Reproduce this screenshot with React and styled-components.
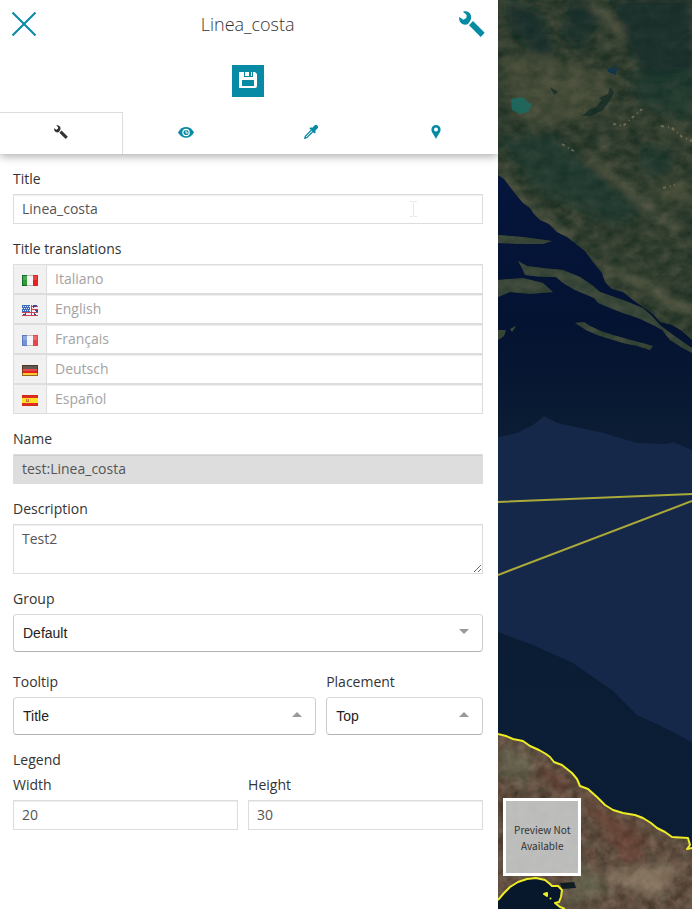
import React from 'react';
import styled, { createGlobalStyle } from 'styled-components';

const GlobalStyle = createGlobalStyle`
  *, *::before, *::after { box-sizing: border-box; }
  body {
    margin: 0;
    background: #fff;
    color: #333;
    font-family: 'Open Sans', sans-serif;
    font-size: 14px;
    line-height: 20px;
  }
  button, input, textarea { font-family: inherit; font-size: inherit; }
`;

const Layout = styled.div`
  display: flex;
  min-height: 100vh;
`;

const Panel = styled.section`
  flex: 0 0 72%;
  min-width: 0;
  background: #fff;
`;

const PanelHeader = styled.header`
  box-shadow: 0 2px 9px rgba(0, 0, 0, 0.35);
  clip-path: inset(0 0 -16px 0);
`;

const TitleBar = styled.div`
  display: flex;
  align-items: center;
  justify-content: space-between;
  height: 48px;
  padding: 0 13px 0 12px;
`;

const Heading = styled.h1`
  margin: 0;
  font-size: 18px;
  font-weight: 300;
  line-height: 24px;
`;

const IconButton = styled.button`
  display: flex;
  padding: 0;
  border: 0;
  background: none;
  color: #078aa3;
`;

const Toolbar = styled.div`
  display: flex;
  justify-content: center;
  padding: 17px 2px 15px 0;
`;

const SaveButton = styled.button`
  display: grid;
  place-items: center;
  width: 32px;
  height: 32px;
  padding: 0 0 2px;
  border: 0;
  background: #078aa3;
  color: #fff;
`;

const TabBar = styled.div`
  display: grid;
  grid-template-columns: 123fr 125fr 125fr 125fr;
  height: 42px;
`;

const Tab = styled.button`
  display: grid;
  place-items: center;
  padding: ${(p) => (p.$active ? '0 1px 3px 0' : '0 0 2px 1px')};
  border: solid #ddd;
  border-width: ${(p) => (p.$active ? '1px 1px 0 0' : '0')};
  background: none;
  color: ${(p) => (p.$active ? '#333' : '#078aa3')};
`;

const Form = styled.form`
  display: flex;
  flex-direction: column;
  gap: 15px;
  padding: 15px 15px 15px 13px;
`;

const Field = styled.div`
  display: flex;
  flex-direction: column;
  gap: 5px;
  min-width: 0;
  position: relative;
`;

const Columns = styled.div`
  display: grid;
  grid-template-columns: ${(p) => p.$split};
  gap: 10px;
  padding-top: ${(p) => (p.$spaced ? '5px' : '0')};
`;

const Label = styled.label`
  font-weight: 500;
  color: #333;
`;

const Fieldset = styled.fieldset`
  min-width: 0;
  margin: 0;
  padding: 0;
  border: 0;
`;

const Legend = styled.legend`
  padding: 0 0 5px;
  font-weight: 500;
`;

const TextInput = styled.input`
  width: 100%;
  height: 30px;
  padding: 0 8px 2px;
  border: 1px solid #ddd;
  border-radius: 0;
  outline: 0;
  background: ${(p) => (p.readOnly ? '#ddd' : '#fff')};
  box-shadow: inset 0 1px 1px rgba(0, 0, 0, 0.07);
  color: #555;
  &::placeholder { color: #a3a3a3; opacity: 1; }
`;

const TextArea = styled.textarea`
  display: block;
  width: 100%;
  height: 50px;
  padding: 4px 8px;
  border: 1px solid #ddd;
  outline: 0;
  box-shadow: inset 0 1px 1px rgba(0, 0, 0, 0.07);
  color: #555;
  line-height: 20px;
  resize: vertical;
`;

const InputGroup = styled.div`
  display: flex;
`;

const Addon = styled.label`
  display: grid;
  place-items: center;
  flex: 0 0 33px;
  height: 30px;
  padding-top: 2px;
  border: solid #ddd;
  border-width: 1px 0 1px 1px;
  background: #f1f1f1;
`;

const SelectBox = styled.div`
  display: grid;
  grid-template-columns: 1fr;
  align-items: center;
`;

const Select = styled.select`
  grid-area: 1 / 1;
  width: 100%;
  height: 38px;
  padding: 0 28px 0 9px;
  appearance: none;
  border: 1px solid;
  border-color: #d9d9d9 #ccc #b3b3b3;
  border-radius: 4px;
  outline: 0;
  background: #fff;
  color: #222;
  font-family: 'Liberation Sans', sans-serif;
  font-size: 14px;
`;

const Arrow = styled.svg`
  grid-area: 1 / 1;
  justify-self: end;
  margin: 0 14px 3px 0;
  pointer-events: none;
`;

const TextCursor = styled.svg`
  position: absolute;
  right: 65px;
  bottom: 7px;
  pointer-events: none;
`;

const MapPane = styled.main`
  flex: 1;
  min-width: 0;
  position: relative;
  overflow: hidden;
  background: #07152f;
`;

const MapDrawing = styled.svg`
  display: block;
  width: 100%;
  height: 100%;
`;

const PreviewTile = styled.button`
  position: absolute;
  left: 5px;
  bottom: 33px;
  width: 78px;
  height: 78px;
  padding: 2px 0 0;
  border: 3px solid #fff;
  background: rgba(202, 205, 205, 0.88);
  color: #333;
  font-family: 'Noto Sans CJK SC', sans-serif;
  font-size: 10px;
  line-height: 16px;
`;

const WrenchIcon = ({ size }) => (
  <svg width={size} height={size} viewBox="0 0 78 78" fill="currentColor" aria-hidden="true">
    <path d="M12 2C23-2 34 4 36 14C37 19 36 24 34 29L27 39C19 44 8 40 3 32C0 27 0 21 1 18L13 26L22 21L23 12Z" />
    <path d="M42 30L77 65L65 78L30 43Z" />
  </svg>
);

const CloseIcon = () => (
  <svg width="24" height="24" viewBox="0 0 24 24" fill="none" stroke="currentColor" strokeWidth="2" aria-hidden="true">
    <path d="M0.5 0.5L23.5 23.5M23.5 0.5L0.5 23.5" />
  </svg>
);

const SaveIcon = () => (
  <svg width="18" height="16" viewBox="0 0 18 16" fill="currentColor" aria-hidden="true">
    <path fillRule="evenodd" d="M0 0H5V5H14V0H16L18 2V14Q18 16 16 16H0ZM3 8V14H15V8Z" />
    <path d="M6 0H10V4H6ZM12 0H13V4H12Z" />
  </svg>
);

const EyeIcon = () => (
  <svg width="16" height="11" viewBox="0 0 16 11" aria-hidden="true">
    <path fill="currentColor" d="M0 5.5C4-1.7 12-1.7 16 5.5C12 12.5 4 12.5 0 5.5Z" />
    <circle cx="8" cy="5.5" r="3.2" fill="none" stroke="#fff" strokeWidth="1.2" />
    <path d="M8 3.5V6H10" fill="none" stroke="#fff" />
  </svg>
);

const DropperIcon = () => (
  <svg width="14" height="14" viewBox="0 0 14 14" fill="currentColor" aria-hidden="true">
    <path d="M8 3L10 1Q12-1 13.4.6Q15 2 13 4L11 6L12 7L10.5 8.5L5.5 3.5L7 2Z" />
    <path d="M7.5 5L1.5 11L1 13L3 12.5L9 6.5" fill="none" stroke="currentColor" strokeWidth="1.2" />
    <path d="M0 14L1 11L3 13Z" />
  </svg>
);

const PinIcon = () => (
  <svg width="10" height="14" viewBox="0 0 10 14" fill="currentColor" aria-hidden="true">
    <path fillRule="evenodd" d="M5 0A4.6 4.6 0 0 1 9.6 4.6C9.6 7.5 6.8 10 5 14C3.2 10 .4 7.5 .4 4.6A4.6 4.6 0 0 1 5 0ZM5 2.5A2 2 0 1 0 5 6.5A2 2 0 0 0 5 2.5Z" />
  </svg>
);

const flags = {
  it: (
    <>
      <path fill="#2c9c38" d="M0 0H5V11H0Z" /><path fill="#f4f4f0" d="M5 0H11V11H5Z" /><path fill="#e82020" d="M11 0H16V11H11Z" />
      <path fill="#fff" opacity=".15" d="M1 1H15V5H1Z" />
      <path fill="none" stroke="#146b20" d="M5 .5H.5V10.5H5" /><path stroke="#bbb" d="M5 .5H11M5 10.5H11" />
    </>
  ),
  en: (
    <>
      <path fill="#f7eaf0" d="M0 0H16V11H0Z" />
      <path stroke="#ce4055" d="M9 1.5H16M9 4.5H16M0 7.5H16M0 10.5H16M9.5 0V11" />
      <path fill="#3d69bd" d="M0 0H8V7H0Z" />
      <path fill="#254b9b" d="M11 0H15V1L11 3ZM12 5H16V7H14ZM0 10L4 8V10ZM12 8L15 10H12Z" />
      <path stroke="#dcebff" strokeDasharray="1 1" d="M1 1.5H8M0 3.5H8M1 5.5H8" />
    </>
  ),
  fr: (
    <>
      <path fill="#7193da" d="M0 0H5V11H0Z" /><path fill="#f3f2f5" d="M5 0H11V11H5Z" /><path fill="#e8444a" d="M11 0H16V11H11Z" />
      <path fill="#fff" opacity=".2" d="M1 1H15V5H1Z" />
      <path fill="none" stroke="#6079b8" d="M5 .5H.5V10.5H5" /><path stroke="#bbb" d="M5 .5H11M5 10.5H11" />
    </>
  ),
  de: (
    <>
      <path fill="#3c3634" d="M0 0H16V4H0Z" /><path fill="#e22322" d="M0 4H16V8H0Z" /><path fill="#ffc934" d="M0 8H16V11H0Z" />
      <path fill="#fff" opacity=".18" d="M1 1H15V6H1Z" /><path fill="none" stroke="#5e3516" opacity=".65" d="M.5 .5H15.5V10.5H.5Z" />
    </>
  ),
  es: (
    <>
      <path fill="#df2d21" d="M0 0H16V11H0Z" /><path fill="#ffe128" d="M0 3H16V8H0Z" />
      <path fill="none" stroke="#c12815" opacity=".65" d="M.5 3V.5H15.5V3M.5 8V10.5H15.5V8" />
      <path fill="#c66b32" d="M4 4H7V7H4Z" /><path fill="#f4c48c" d="M5 4H6V6H5Z" />
    </>
  ),
};

const Flag = ({ code }) => (
  <svg width="16" height="11" viewBox="0 0 16 11" aria-hidden="true" shapeRendering="crispEdges">{flags[code]}</svg>
);

const languages = [
  ['it', 'Italiano'],
  ['en', 'English'],
  ['fr', 'Français'],
  ['de', 'Deutsch'],
  ['es', 'Español'],
];

const tabs = [
  ['General', <WrenchIcon size={14} />],
  ['Display', <EyeIcon />],
  ['Style', <DropperIcon />],
  ['Feature info', <PinIcon />],
];

const Dropdown = ({ id, label, value, up }) => (
  <Field>
    <Label htmlFor={id}>{label}</Label>
    <SelectBox>
      <Select id={id} defaultValue={value}>
        <option>{value}</option>
      </Select>
      <Arrow width="10" height="5" viewBox="0 0 10 5" fill="#999" aria-hidden="true">
        <path d={up ? 'M0 5L5 0L10 5Z' : 'M0 0H10L5 5Z'} />
      </Arrow>
    </SelectBox>
  </Field>
);

const northCoast = 'M0 0H194V340L184 331L174 325L162 322L155 314L145 307L135 300L125 292L114 289L107 282L104 273L95 262L87 251L79 245L69 237L59 232L51 224L42 220L36 214L32 208L25 203L19 196L12 187L6 179L0 175Z';
const islands = 'M0 235L25 237L54 241L45 244L25 244L0 243ZM20 261L29 266L45 268L65 270L82 277L94 285L102 292L125 300L145 308L154 316L162 325L175 335L194 348V353L183 347L172 340L164 330L155 325L140 318L125 313L112 308L100 303L96 298L89 295L77 290L65 283L58 277L47 277L35 276L27 275L24 268ZM0 280L12 279L25 278L45 283L55 292L32 294L12 292L0 297ZM77 323L86 322L92 326L103 331L115 335L133 340L155 346L152 350L139 346L125 343L112 339L99 335L88 330ZM0 330L8 330L6 336L0 340ZM12 329L18 326L14 332Z';
const southShore = 'M0 734L8 736L15 739L25 741L32 746L41 750L48 754L52 757L56 762L64 765L74 773L79 779L82 786L90 789L99 797L107 805L115 810L125 813L137 815L145 818L153 823L159 828L167 832L174 837L190 838L192 845L189 849L194 848';
const bayShore = 'M0 900L6 893L12 887L20 882L29 879L38 878L47 880L52 884L54 886L60 886L64 890L63 897L61 902L57 903L62 907L67 909';

const SatelliteMap = () => (
  <MapDrawing viewBox="0 0 194 909" preserveAspectRatio="xMinYMin slice" role="img" aria-label="Satellite map">
    <defs>
      <linearGradient id="deepSea" x1="0" y1="0" x2="0" y2="1">
        <stop offset="0.2" stopColor="#05153c" />
        <stop offset="0.36" stopColor="#041331" />
        <stop offset="0.48" stopColor="#0b1c34" />
        <stop offset="1" stopColor="#0b1e36" />
      </linearGradient>
      <filter id="greenTerrain" x="0" y="0" width="100%" height="100%" colorInterpolationFilters="sRGB">
        <feTurbulence type="fractalNoise" baseFrequency="0.07 0.1" numOctaves="5" seed="8" />
        <feColorMatrix values="0.4 0.1 0 0 -0.05  0.28 0.06 0 0 0.05  0.24 0.06 0 0 0.01  0 0 0 0 1" />
        <feComposite in2="SourceGraphic" operator="in" />
      </filter>
      <filter id="brownTerrain" x="0" y="0" width="100%" height="100%" colorInterpolationFilters="sRGB">
        <feTurbulence type="fractalNoise" baseFrequency="0.1" numOctaves="5" seed="4" />
        <feColorMatrix values="0.4 0.15 0 0 0.1  0.3 0.22 0 0 0.04  0.28 0.2 0 0 0.01  0 0 0 0 1" />
        <feComposite in2="SourceGraphic" operator="in" />
      </filter>
      <filter id="soft"><feGaussianBlur stdDeviation="4" /></filter>
      <clipPath id="northLand"><path d={northCoast} /></clipPath>
      <clipPath id="southLand"><path d={`${southShore}V909H0Z`} /></clipPath>
    </defs>
    <rect width="194" height="909" fill="url(#deepSea)" />
    <path fill="#162849" d="M0 437L19 433L35 425L46 416L59 423L102 432L139 443L169 444L175 442L194 450V742L165 727L139 715L114 690L102 682L75 663L35 645L0 632Z" />
    <path d={northCoast + islands} filter="url(#greenTerrain)" />
    <path d={northCoast} fill="#2e4538" opacity=".45" />
    <path d={islands} fill="#3a4d40" opacity=".65" />
    <g clipPath="url(#northLand)">
      <g filter="url(#soft)">
        <path fill="#0b2b29" opacity=".65" d="M10 0L40 12L55 50L42 62L12 25ZM75 0L105 15L80 50L65 35ZM112 0H194V75L150 80L125 35Z" />
        <path fill="#17382f" opacity=".5" d="M0 140L50 132L110 180L150 205L120 225L40 190ZM145 143L175 153L165 177L145 170ZM130 75L194 70V120L145 105Z" />
        <path fill="#6b6749" opacity=".35" d="M3 60L40 55L100 72L120 92L82 120L35 125L15 105ZM120 125L150 112L130 130ZM162 125L190 130L194 145L165 133ZM155 185L190 180L194 205L160 200Z" />
        <path stroke="#8b8164" strokeWidth="4" fill="none" opacity=".6" d="M4 176L38 212L74 240M92 0L112 22L126 37M90 155L150 208L180 230" />
        <path stroke="#827a5c" strokeWidth="8" fill="none" opacity=".5" d="M110 270L150 285L176 306L194 312" />
      </g>
      <path fill="#082422" opacity=".6" d="M112 87L116 92L113 99L105 110L93 116L84 116L92 109L98 107L104 100L101 98L110 94ZM52 87L60 92L56 95Z" />
      <path fill="#167067" opacity=".75" d="M13 99L24 97L34 105L30 112L22 114L14 110Z" />
      <path fill="#12354b" d="M109 69L119 67L118 75L110 72Z" />
      <path fill="none" stroke="#a19378" strokeWidth="2" strokeDasharray="3 4 1 3" opacity=".5" d="M115 124L125 126L135 117L144 109M163 126L174 128L184 137L194 141M165 188L177 185M64 144L76 151" />
    </g>
    <path d={`${southShore}V909H0Z`} filter="url(#brownTerrain)" />
    <path d={`${southShore}V909H0Z`} fill="#5c5040" opacity=".35" />
    <g clipPath="url(#southLand)">
      <g filter="url(#soft)" opacity=".4">
        <path fill="#718064" d="M2 744L35 755L30 785L5 775ZM85 865L115 888L65 909Z" />
        <path fill="#753e30" d="M75 790L120 819L150 838L135 875L108 835ZM35 765L70 778L64 795Z" />
        <path fill="#c0ad91" d="M95 874L183 862L160 899Z" />
      </g>
    </g>
    <path d={`${bayShore}H0Z`} fill="#07182c" />
    <path d="M62 883L76 882L78 888L64 889Z" fill="#101c24" />
    <g fill="none" stroke="#edec25" strokeWidth="2" strokeLinejoin="round">
      <path d={southShore} />
      <path d={bayShore} />
      <path d="M46 894L49 893L49 896ZM52 898L53 899" />
    </g>
    <path d="M0 502L194 494M0 575L194 501" fill="none" stroke="#aaa93a" strokeWidth="2" />
  </MapDrawing>
);

export default function App() {
  return (
    <>
      <GlobalStyle />
      <Layout>
        <Panel>
          <PanelHeader>
            <TitleBar>
              <IconButton type="button" aria-label="Close"><CloseIcon /></IconButton>
              <Heading>Linea_costa</Heading>
              <IconButton type="button" aria-label="Settings"><WrenchIcon size={26} /></IconButton>
            </TitleBar>
            <Toolbar>
              <SaveButton type="button" aria-label="Save"><SaveIcon /></SaveButton>
            </Toolbar>
            <TabBar role="tablist">
              {tabs.map(([name, icon], i) => (
                <Tab key={name} type="button" role="tab" aria-label={name} aria-selected={i === 0} $active={i === 0}>{icon}</Tab>
              ))}
            </TabBar>
          </PanelHeader>
          <Form>
            <Field>
              <Label htmlFor="title">Title</Label>
              <TextInput id="title" defaultValue="Linea_costa" />
              <TextCursor width="9" height="16" viewBox="0 0 9 16" fill="none" stroke="#e8e8e8" aria-hidden="true">
                <path d="M1 .5H4M5 .5H8M4.5 1V15M1 15.5H4M5 15.5H8" />
              </TextCursor>
            </Field>
            <Fieldset>
              <Legend>Title translations</Legend>
              {languages.map(([code, name]) => (
                <InputGroup key={code}>
                  <Addon htmlFor={`title-${code}`} aria-label={name}><Flag code={code} /></Addon>
                  <TextInput id={`title-${code}`} placeholder={name} />
                </InputGroup>
              ))}
            </Fieldset>
            <Field>
              <Label htmlFor="name">Name</Label>
              <TextInput id="name" defaultValue="test:Linea_costa" readOnly />
            </Field>
            <Field>
              <Label htmlFor="description">Description</Label>
              <TextArea id="description" defaultValue="Test2" />
            </Field>
            <Dropdown id="group" label="Group" value="Default" />
            <Columns $split="303fr 157fr" $spaced>
              <Dropdown id="tooltip" label="Tooltip" value="Title" up />
              <Dropdown id="placement" label="Placement" value="Top" up />
            </Columns>
            <Fieldset>
              <Legend>Legend</Legend>
              <Columns $split="225fr 235fr">
                <Field>
                  <Label htmlFor="width">Width</Label>
                  <TextInput id="width" defaultValue="20" />
                </Field>
                <Field>
                  <Label htmlFor="height">Height</Label>
                  <TextInput id="height" defaultValue="30" />
                </Field>
              </Columns>
            </Fieldset>
          </Form>
        </Panel>
        <MapPane>
          <SatelliteMap />
          <PreviewTile type="button">Preview Not<br />Available</PreviewTile>
        </MapPane>
      </Layout>
    </>
  );
}
